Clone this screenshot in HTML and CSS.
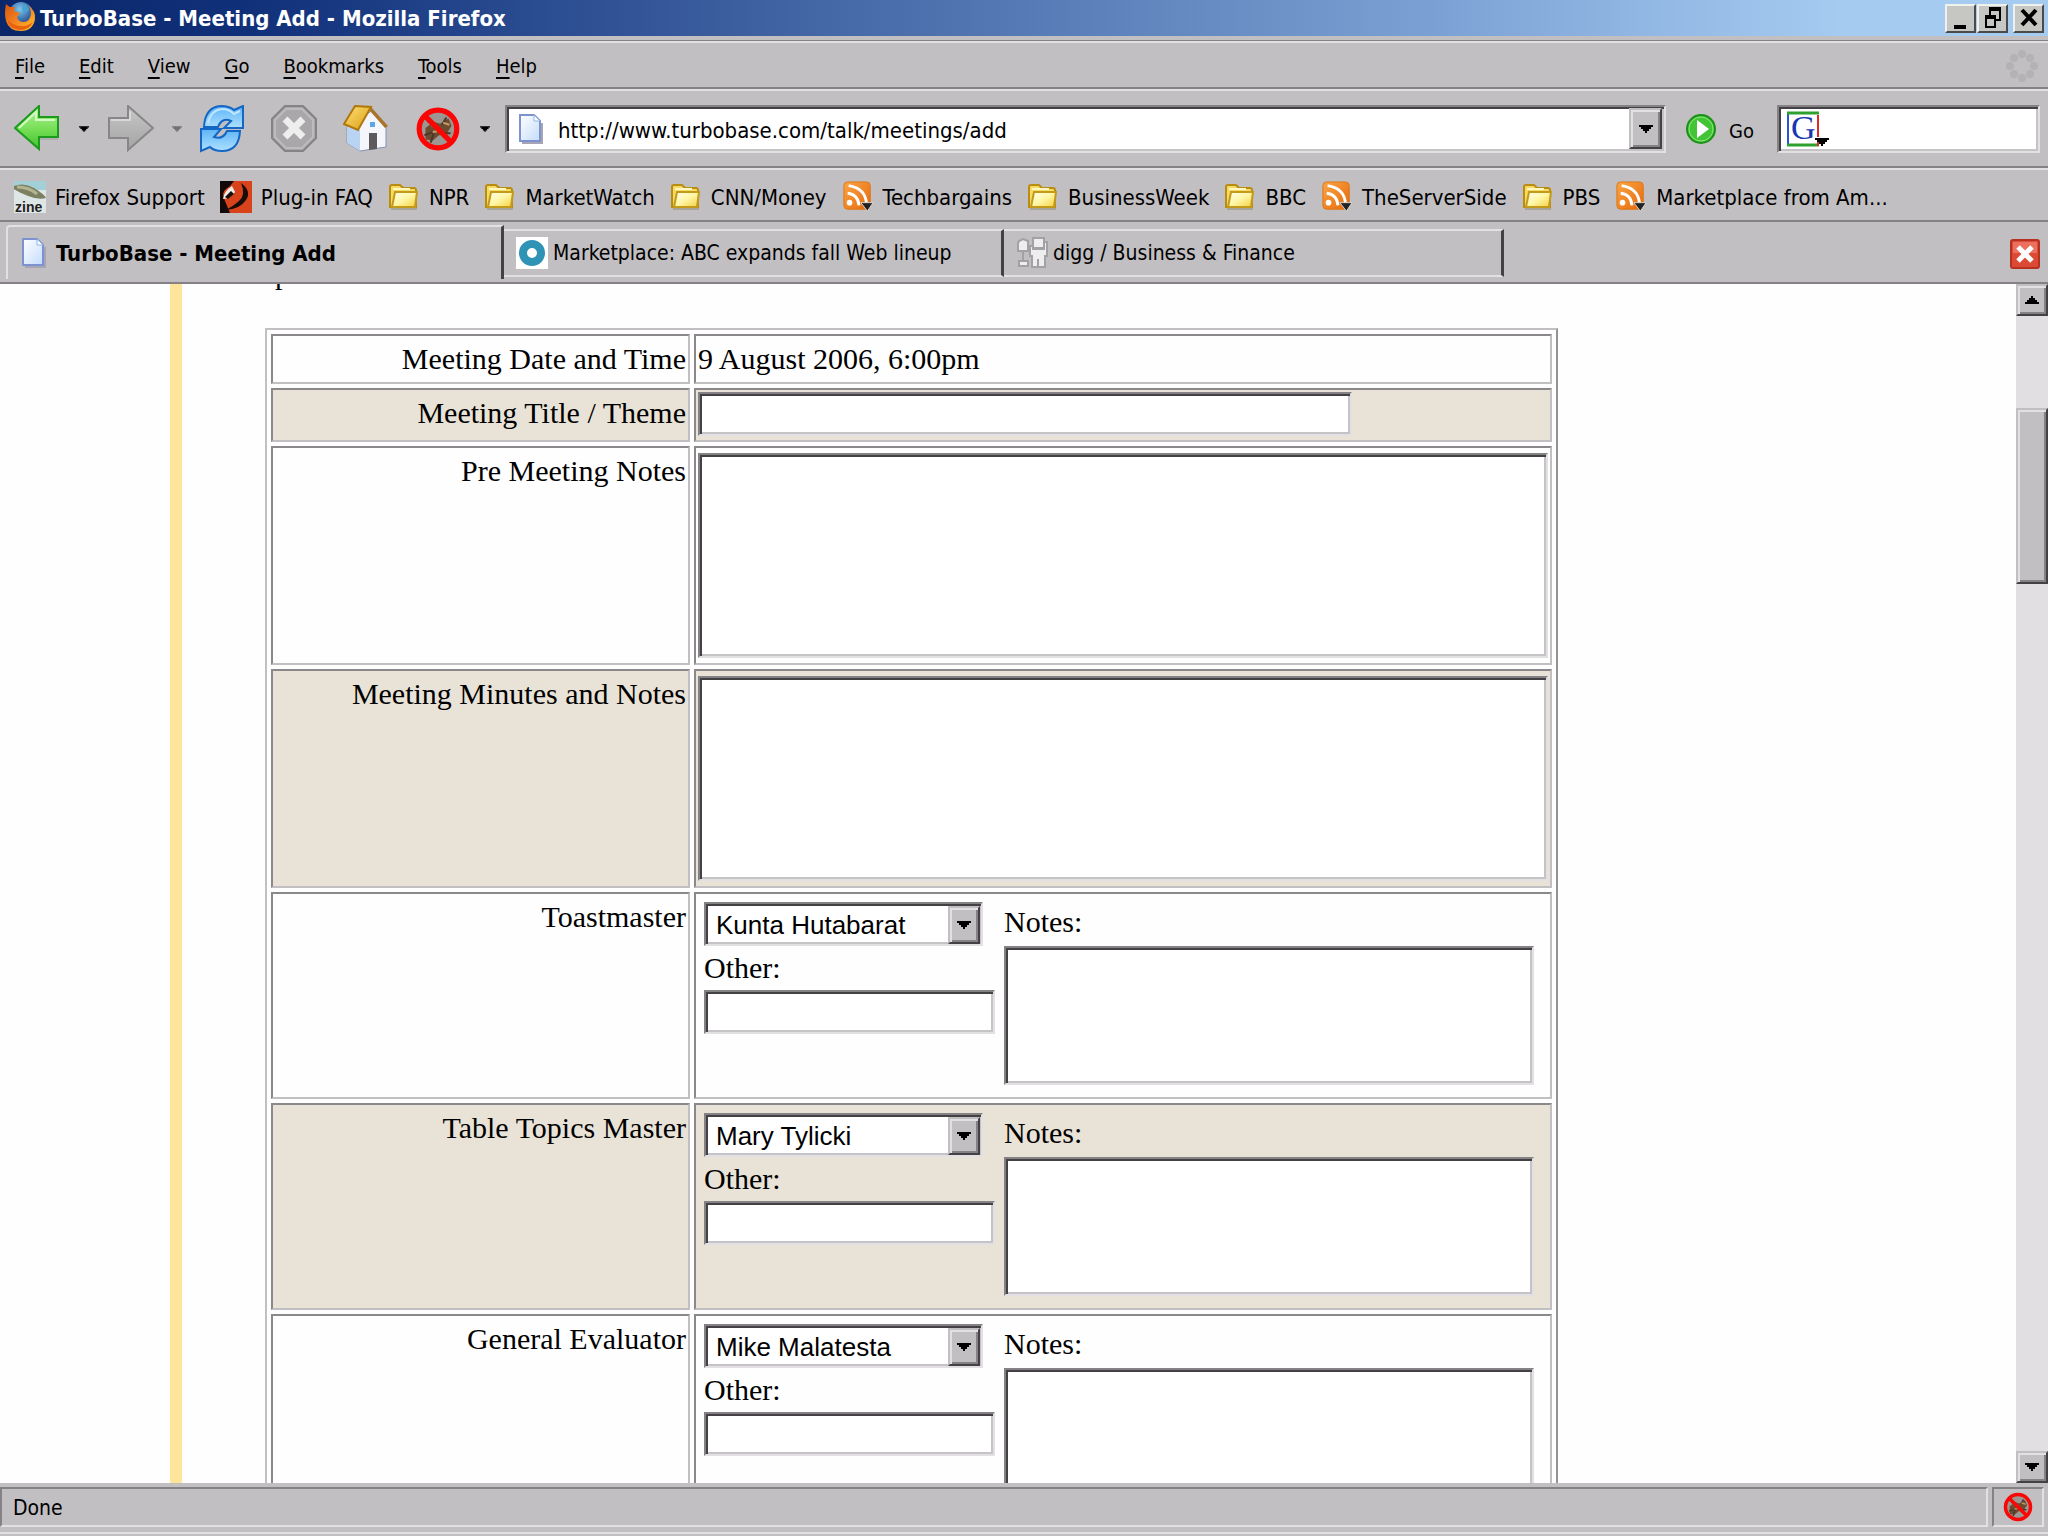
FILE: index.html
```html
<!DOCTYPE html>
<html lang="en">
<head>
<meta charset="utf-8">
<title>TurboBase - Meeting Add - Mozilla Firefox</title>
<link rel="stylesheet" href="styles.css">
</head>
<body>
<svg class="defs" aria-hidden="true">
  <defs>
    <linearGradient id="gGreen" x1="0" y1="0" x2="0" y2="1"><stop offset="0" stop-color="#b4f29a"/><stop offset=".5" stop-color="#7be05a"/><stop offset="1" stop-color="#3fc22c"/></linearGradient>
    <linearGradient id="gGrey" x1="0" y1="0" x2="0" y2="1"><stop offset="0" stop-color="#c8c7c8"/><stop offset="1" stop-color="#a5a4a5"/></linearGradient>
    <linearGradient id="gBlue" x1="0" y1="0" x2="0" y2="1"><stop offset="0" stop-color="#5db4f7"/><stop offset="1" stop-color="#aee0ff"/></linearGradient>
    <linearGradient id="gFolder" x1="0" y1="0" x2="1" y2="1"><stop offset="0" stop-color="#fffef0"/><stop offset=".5" stop-color="#fff6a4"/><stop offset="1" stop-color="#f3cf3c"/></linearGradient>
    <linearGradient id="gRss" x1="0" y1="0" x2="1" y2="1"><stop offset="0" stop-color="#f9a545"/><stop offset="1" stop-color="#e8690a"/></linearGradient>
    <linearGradient id="gPage" x1="0" y1="0" x2="1" y2="1"><stop offset="0" stop-color="#ffffff"/><stop offset="1" stop-color="#c3dcfb"/></linearGradient>
    <linearGradient id="gRoof" x1="0" y1="0" x2="1" y2="1"><stop offset="0" stop-color="#ffe27a"/><stop offset="1" stop-color="#d99b10"/></linearGradient>
    <radialGradient id="gGlobe" cx=".45" cy=".3" r=".7"><stop offset="0" stop-color="#7ec6ee"/><stop offset="1" stop-color="#173c86"/></radialGradient>
    <linearGradient id="gFox" x1="0" y1="0" x2="1" y2="1"><stop offset="0" stop-color="#d5560f"/><stop offset=".5" stop-color="#f58220"/><stop offset="1" stop-color="#fdc52e"/></linearGradient>
  </defs>
  <symbol id="folder" viewBox="0 0 32 32">
    <path d="M3 28h26" stroke="#a8a498" stroke-width="2"/>
    <path d="M2 26V6q0-2 2-2h8l3 3h11q2 0 2 2v17z" fill="#f6da62" stroke="#b98d12" stroke-width="2"/>
    <path d="M5 8h17" stroke="#fff8c0" stroke-width="2"/>
    <path d="M7 11h22l-2 15H4z" fill="url(#gFolder)" stroke="#c39a1a" stroke-width="2"/>
  </symbol>
  <symbol id="rss" viewBox="0 0 32 34">
    <rect x="1" y="1" width="28" height="29" rx="4" fill="url(#gRss)" stroke="#dd7410"/>
    <circle cx="7" cy="23" r="3" fill="#fff"/>
    <path d="M5 13q11 1 12 13M6 5q18 3 19 19" fill="none" stroke="#fff" stroke-width="3"/>
    <path d="M19 23h13l-6 9z" fill="#222" stroke="#d8d8d8"/>
  </symbol>
  <symbol id="page" viewBox="0 0 24 30">
    <path d="M3 29h20V9" fill="none" stroke="#a7a5b5" stroke-width="2"/>
    <path d="M1 1h14l6 6v20H1z" fill="url(#gPage)" stroke="#7f92d0" stroke-width="2"/>
    <path d="M15 1v6h6z" fill="#fff" stroke="#8fb4e4"/>
  </symbol>
  <symbol id="adblock" viewBox="0 0 44 46">
    <circle cx="23" cy="24" r="18" fill="#9c9793"/>
    <path d="M10 22l8-6 6 2 8-5 3 7-5 8-7 1-6 5-7-1z" fill="#6e4b2f"/>
    <path d="M9 29l8-3M12 15l6 5M30 12l-4 7M34 27l-8 0M18 27l-3 9" stroke="#4b382b" stroke-width="2"/>
    <path d="M16 20l6 2M27 17l6 2M17 26l5-1" stroke="#c19a66" stroke-width="2"/>
    <circle cx="22" cy="23" r="18" fill="none" stroke="#fb0505" stroke-width="5"/>
    <path d="M9 10l26 26" stroke="#fb0505" stroke-width="5"/>
  </symbol>
  <symbol id="caret" viewBox="0 0 14 8"><path d="M0 0h14v2h-2v2h-2v2H8v2H6V6H4V4H2V2H0z"/></symbol>
</svg>

<header class="titlebar">
  <svg class="fox" viewBox="0 0 32 30" aria-hidden="true">
    <circle cx="17" cy="13" r="12" fill="url(#gGlobe)"/>
    <path d="M19 3q5 1 6 6l-4 3-3-4z" fill="#4aa3cf"/>
    <path d="M2 3q2 2 4 3l5 0-1 4 6 2-3 4q1 5 7 5 6-1 7-8 0-6-3-9 8 6 7 14-2 12-14 12Q5 30 2 20q-2-8 0-17z" fill="url(#gFox)"/>
    <path d="M3 18q2 10 13 11 9 0 13-8-6 5-13 4-8-1-13-7z" fill="#e8620e"/>
  </svg>
  <h1 class="title">TurboBase - Meeting Add - Mozilla Firefox</h1>
  <div class="winbtns">
    <button class="winbtn" aria-label="Minimize"><svg viewBox="0 0 24 24"><path d="M5 19h12v4H5z"/></svg></button>
    <button class="winbtn" aria-label="Restore"><svg viewBox="0 0 24 24"><path d="M8 3h12M4 11h11" stroke="#000" stroke-width="4"/><path d="M9 10V3M19 3v11h-4M5 11v10h9V11" fill="none" stroke="#000" stroke-width="2"/></svg></button>
    <button class="winbtn winbtn-close" aria-label="Close"><svg viewBox="0 0 24 24"><path d="M5 4l14 15M19 4L5 19" stroke="#000" stroke-width="4"/></svg></button>
  </div>
</header>

<nav class="menubar">
  <button><u>F</u>ile</button><button><u>E</u>dit</button><button><u>V</u>iew</button><button><u>G</u>o</button><button><u>B</u>ookmarks</button><button><u>T</u>ools</button><button><u>H</u>elp</button>
  <svg class="throbber" viewBox="0 0 32 32" aria-hidden="true"><g fill="#b4b2b4"><circle cx="16" cy="4" r="4"/><circle cx="24" cy="8" r="4"/><circle cx="28" cy="16" r="4"/><circle cx="24" cy="24" r="4"/><circle cx="16" cy="28" r="4"/><circle cx="8" cy="24" r="4"/><circle cx="4" cy="16" r="4"/><circle cx="8" cy="8" r="4"/></g></svg>
</nav>

<div class="toolbar">
  <button class="tool" aria-label="Back"><svg viewBox="0 0 46 48"><path d="M3 24L26 3v11h18v21H26v11z" fill="#a09ea0" opacity=".5"/><path d="M1 23L25 1v11h19v20H25v12z" fill="url(#gGreen)" stroke="#1b9a1b" stroke-width="2"/><path d="M5 23L22 7v8h19" fill="none" stroke="#d4fac4" stroke-width="2"/></svg></button>
  <button class="drop" aria-label="Back history"><svg><use href="#caret"/></svg></button>
  <button class="tool" aria-label="Forward"><svg viewBox="0 0 46 48"><path d="M45 23L20 1v12H1v20h19v12z" fill="url(#gGrey)" stroke="#888688" stroke-width="2"/><path d="M3 15h19V6" fill="none" stroke="#d8d7d8" stroke-width="2"/></svg></button>
  <button class="drop drop-off" aria-label="Forward history"><svg><use href="#caret"/></svg></button>
  <button class="tool tool-reload" aria-label="Reload"><svg viewBox="0 0 46 48"><path d="M5 22Q6 2 22 1q8 0 13 4l9-4v22H25l7-7q-9-4-13 6z" fill="url(#gBlue)" stroke="#1467c4" stroke-width="2"/><path d="M41 26Q40 46 23 46q-8 0-12-4l-9 4V24h20l-7 8q9 3 13-6z" fill="url(#gBlue)" stroke="#1467c4" stroke-width="2"/><path d="M9 18Q12 5 23 4q7 0 12 5l6-3" fill="none" stroke="#bfe5ff" stroke-width="2"/></svg></button>
  <button class="tool tool-wide" aria-label="Stop"><svg viewBox="0 0 46 48"><path d="M14 1h18l13 13v19L32 46H14L1 33V14z" fill="#a9a7a9" stroke="#858385" stroke-width="2"/><path d="M15 4h16l11 11v17L31 43H15L4 32V15z" fill="none" stroke="#bdbbbd" stroke-width="2"/><path d="M14 14l18 18M32 14L14 32" stroke="#efeeef" stroke-width="7"/></svg></button>
  <button class="tool tool-wide" aria-label="Home"><svg viewBox="0 0 46 48"><path d="M4 22v16l13 8 26-4V20L30 5z" fill="#f4f6fb" stroke="#8593ac"/><path d="M4 22v16l13 8V25z" fill="#b9d4f2"/><path d="M26 28h8v16l-8 1z" fill="#5c5a5c"/><path d="M27 17h5v5h-5z" fill="#5aa7e8"/><path d="M28 2l17 19-3 2L27 6z" fill="#a8742a"/><path d="M12 1l16 1-13 23L1 19z" fill="url(#gRoof)" stroke="#b0780c" stroke-width="2"/></svg></button>
  <button class="tool tool-wide" aria-label="Adblock"><svg><use href="#adblock"/></svg></button>
  <button class="drop" aria-label="Adblock menu"><svg><use href="#caret"/></svg></button>
  <div class="field urlbar">
    <svg class="page-icon"><use href="#page"/></svg>
    <input type="text" aria-label="Address" value="http://www.turbobase.com/talk/meetings/add">
    <button class="raised url-drop" aria-label="Show history"><svg class="caret"><use href="#caret"/></svg></button>
  </div>
  <button class="go"><svg viewBox="0 0 32 32" aria-hidden="true"><circle cx="16" cy="16" r="14" fill="#42c436" stroke="#1c9119" stroke-width="2"/><circle cx="16" cy="16" r="12" fill="none" stroke="#8be77a" stroke-width="1"/><path d="M12 7l12 9-12 9z" fill="#fff"/></svg><span>Go</span></button>
  <div class="field search">
    <svg class="google" viewBox="0 0 44 36" aria-hidden="true"><path d="M2 34V2" stroke="#2a55d0" stroke-width="2"/><path d="M1 2h32M1 34h32" stroke="#2ea02e" stroke-width="3"/><path d="M32 4v22M32 31v4" stroke="#e02828" stroke-width="2"/><text class="google-g" x="5" y="28">G</text><path d="M29 27h14v2h-2v2h-2v2h-2v2h-2v-2h-2v-2h-2v-2h-2z"/></svg>
    <input type="text" aria-label="Search the web">
  </div>
</div>

<nav class="bookmarks">
  <a href="#"><svg viewBox="0 0 32 32"><path d="M0 0h32v32H0z" fill="#dfe6e6"/><path d="M0 0h32v9H0z" fill="#a3cfd6"/><path d="M0 5Q10 1 20 7t12 10q-8 2-18-2T0 8z" fill="#7d8060"/><path d="M3 6q12 0 20 7" stroke="#b2b391" stroke-width="3" fill="none"/><text class="zine" x="1" y="31">zine</text></svg>Firefox Support</a>
  <a href="#"><svg viewBox="0 0 32 32"><path d="M0 0h32v32H0z" fill="#d9431c"/><path d="M0 0h14q-3 5-8 8T5 20l5 12H0z" fill="#120a08"/><path d="M21 2q5 12-2 18t-13 9q14-1 20-10T21 2z" fill="#1a0d08"/><path d="M12 5q-8 5-9 13 7 0 12-7z" fill="#f1ece8"/><path d="M5 16l6-6 3 3-6 5z" fill="#15100e"/></svg>Plug-in FAQ</a>
  <a href="#"><svg><use href="#folder"/></svg>NPR</a>
  <a href="#"><svg><use href="#folder"/></svg>MarketWatch</a>
  <a href="#"><svg><use href="#folder"/></svg>CNN/Money</a>
  <a href="#"><svg><use href="#rss"/></svg>Techbargains</a>
  <a href="#"><svg><use href="#folder"/></svg>BusinessWeek</a>
  <a href="#"><svg><use href="#folder"/></svg>BBC</a>
  <a href="#"><svg><use href="#rss"/></svg>TheServerSide</a>
  <a href="#"><svg><use href="#folder"/></svg>PBS</a>
  <a href="#"><svg><use href="#rss"/></svg>Marketplace from Am...</a>
</nav>

<div class="tabs">
  <button class="tab tab-active"><svg class="page-icon"><use href="#page"/></svg>TurboBase - Meeting Add</button>
  <button class="tab"><svg class="favicon" viewBox="0 0 32 32" aria-hidden="true"><path d="M0 0h32v32H0z" fill="#fff"/><circle cx="16" cy="16" r="9" fill="none" stroke="#2f93b5" stroke-width="8"/></svg>Marketplace: ABC expands fall Web lineup</button>
  <button class="tab"><svg class="favicon" viewBox="0 0 32 32" aria-hidden="true"><g fill="#efeeef" stroke="#a3a1a5" stroke-width="2"><path d="M7 14v10"/><path d="M3 4l4-2 5 2v10H2V6zM3 24h9v5H3zM17 1h11v10H17z"/><path d="M14 9h3v3h11V5h3v14h-2v11H16V19h-2z"/></g><path d="M22 22v8" stroke="#a3a1a5" stroke-width="2"/></svg>digg / Business &amp; Finance</button>
  <div class="tab-space"></div>
  <button class="tab-close" aria-label="Close tab"><svg viewBox="0 0 30 30"><rect x="1" y="1" width="28" height="28" rx="2" fill="#dc4a35" stroke="#b8301f" stroke-width="2"/><path d="M3 14V3h24v11z" fill="#ef8270" opacity=".7"/><path d="M8 8l14 14M22 8L8 22" stroke="#fff" stroke-width="5"/></svg></button>
</div>

<div class="viewport">
  <div class="margin"></div>
  <main class="content">
    <p class="intro">p</p>
    <table class="form">
      <tr><th scope="row">Meeting Date and Time</th><td>9 August 2006, 6:00pm</td></tr>
      <tr class="alt"><th scope="row"><label for="theme">Meeting Title / Theme</label></th><td><input class="field theme" id="theme" type="text"></td></tr>
      <tr><th scope="row"><label for="pre">Pre Meeting Notes</label></th><td><textarea class="field notes" id="pre"></textarea></td></tr>
      <tr class="alt"><th scope="row"><label for="minutes">Meeting Minutes and Notes</label></th><td><textarea class="field notes" id="minutes"></textarea></td></tr>
      <tr><th scope="row"><label for="toast">Toastmaster</label></th><td>
        <div class="role">
          <div class="person">
            <div class="picker"><select class="field" id="toast"><option>Kunta Hutabarat</option></select><span class="raised picker-arrow"><svg class="caret"><use href="#caret"/></svg></span></div>
            <label for="toast-other">Other:</label><input class="field" id="toast-other" type="text">
          </div>
          <div class="remarks"><label for="toast-notes">Notes:</label><textarea class="field" id="toast-notes"></textarea></div>
        </div></td></tr>
      <tr class="alt"><th scope="row"><label for="topics">Table Topics Master</label></th><td>
        <div class="role">
          <div class="person">
            <div class="picker"><select class="field" id="topics"><option>Mary Tylicki</option></select><span class="raised picker-arrow"><svg class="caret"><use href="#caret"/></svg></span></div>
            <label for="topics-other">Other:</label><input class="field" id="topics-other" type="text">
          </div>
          <div class="remarks"><label for="topics-notes">Notes:</label><textarea class="field" id="topics-notes"></textarea></div>
        </div></td></tr>
      <tr><th scope="row"><label for="eval">General Evaluator</label></th><td>
        <div class="role">
          <div class="person">
            <div class="picker"><select class="field" id="eval"><option>Mike Malatesta</option></select><span class="raised picker-arrow"><svg class="caret"><use href="#caret"/></svg></span></div>
            <label for="eval-other">Other:</label><input class="field" id="eval-other" type="text">
          </div>
          <div class="remarks"><label for="eval-notes">Notes:</label><textarea class="field" id="eval-notes"></textarea></div>
        </div></td></tr>
    </table>
  </main>
  <div class="scrollbar">
    <button class="raised" aria-label="Scroll up"><svg class="caret caret-up"><use href="#caret"/></svg></button>
    <div class="track"><div class="raised thumb"></div></div>
    <button class="raised" aria-label="Scroll down"><svg class="caret"><use href="#caret"/></svg></button>
  </div>
</div>

<footer class="status">
  <div class="panel panel-text">Done</div>
  <div class="panel panel-icon"><svg aria-hidden="true"><use href="#adblock"/></svg></div>
</footer>
</body>
</html>
```

FILE: styles.css
```css
:root {
  --face: #c2bfc2;
  --light: #e2e0e2;
  --shade: #848284;
  --dark: #434143;
  --ui: "DejaVu Sans Condensed", "DejaVu Sans", sans-serif;
}

* { box-sizing: border-box; }

body {
  margin: 0;
  height: 100vh;
  display: flex;
  flex-direction: column;
  overflow: hidden;
  background: var(--face);
  color: #000;
  font-family: var(--ui);
  font-size: 22px;
}

button {
  margin: 0;
  padding: 0;
  border: 0;
  background: none;
  color: inherit;
  font: inherit;
}

svg { display: block; flex: none; }
.defs { position: absolute; width: 0; height: 0; }

/* title bar */
.titlebar {
  height: 36px;
  flex: none;
  display: flex;
  align-items: center;
  padding: 0 4px;
  background: linear-gradient(90deg, #0b2769, #10307a 12%, #7ba1d4 70%, #a6cbf1 90%);
}
.fox { width: 32px; height: 30px; margin-bottom: 4px; }
.title {
  flex: 1;
  margin: 0 0 0 4px;
  color: #fff;
  font-size: 22px;
  font-weight: bold;
  white-space: nowrap;
}
.winbtns { display: flex; gap: 1px; }
.winbtn {
  width: 31px;
  height: 29px;
  display: grid;
  place-items: center;
  background: #c6c6c2;
  border: 2px solid;
  border-color: #f0f0ec #4a4a4a #4a4a4a #f0f0ec;
}
.winbtn svg { width: 24px; height: 24px; }
.winbtn-close { margin-left: 4px; }

/* menu bar */
.menubar {
  height: 53px;
  flex: none;
  display: flex;
  align-items: center;
  gap: 34px;
  padding: 8px 10px 0 15px;
  border-bottom: 2px solid var(--shade);
  background: linear-gradient(var(--face) 4px, var(--shade) 4px, var(--shade) 5px, var(--light) 5px, var(--light) 7px, transparent 7px);
  font-size: 20px;
}
.menubar u { text-underline-offset: 4px; text-decoration-thickness: 2px; }
.throbber { width: 32px; height: 32px; margin-left: auto; }

/* navigation toolbar */
.toolbar {
  height: 79px;
  flex: none;
  display: flex;
  align-items: center;
  padding: 0 8px 0 14px;
  border-top: 2px solid var(--light);
  border-bottom: 2px solid var(--shade);
}
.tool svg { width: 46px; height: 48px; }
.tool-wide { margin-right: 26px; }
.tool-reload { margin-right: 26px; }
.drop { width: 48px; display: grid; place-items: center; }
.drop svg { width: 10px; height: 6px; }
.drop-off { width: 45px; opacity: .4; }
.tool-wide + .drop { width: 12px; margin: 0 14px 0 -8px; }
.field {
  border: 2px solid;
  border-color: #848284 #e2e0e2 #e2e0e2 #848284;
  border-radius: 0;
  background: #fff;
  box-shadow: inset 2px 2px 0 #434143, inset -2px -2px 0 #c6c3c6;
}
.toolbar .field {
  height: 48px;
  display: flex;
  align-items: center;
  padding: 2px;
}
.toolbar input {
  flex: 1;
  min-width: 0;
  padding: 4px 0 0;
  border: 0;
  background: none;
  color: #000;
  font: inherit;
}
.urlbar { flex: 1; }
.page-icon { width: 24px; height: 30px; }
.urlbar .page-icon { margin: 0 15px 0 10px; }
.raised {
  display: grid;
  place-items: center;
  background: var(--face);
  border: 2px solid;
  border-color: #c2bfc2 #434143 #434143 #c2bfc2;
  box-shadow: inset 2px 2px 0 #e2e0e2, inset -2px -2px 0 #848284;
}
.url-drop { width: 33px; height: 41px; }
.caret { width: 14px; height: 8px; }
.caret-up { transform: rotate(180deg); }
.go {
  width: 111px;
  display: flex;
  align-items: center;
  gap: 12px;
  padding-left: 19px;
  font-size: 20px;
}
.go span { padding-top: 4px; }
.go svg { width: 32px; height: 32px; }
.search { width: 263px; flex: none; }
.google { width: 44px; height: 36px; margin-left: 5px; }
.google-g { fill: #1838b0; font: 34px "Liberation Serif", serif; }

/* bookmarks toolbar */
.bookmarks {
  height: 54px;
  flex: none;
  display: flex;
  align-items: center;
  gap: 15px;
  padding: 4px 0 0 14px;
  border-top: 2px solid var(--light);
  border-bottom: 2px solid var(--shade);
  white-space: nowrap;
}
.bookmarks a {
  display: flex;
  align-items: center;
  gap: 9px;
  color: inherit;
  text-decoration: none;
}
.bookmarks svg { width: 32px; height: 32px; }
.zine { fill: #222; font: bold 14px "Liberation Sans", Arial, sans-serif; }

/* tab strip */
.tabs {
  height: 62px;
  flex: none;
  display: flex;
  align-items: stretch;
  padding: 3px 8px 0 6px;
  border-bottom: 2px solid var(--shade);
  font-size: 21px;
}
.tab {
  width: 500px;
  display: flex;
  align-items: center;
  gap: 5px;
  margin: 4px 0 5px;
  padding-left: 12px;
  border-top: 2px solid var(--light);
  border-bottom: 2px solid var(--light);
  border-right: 3px solid var(--dark);
  white-space: nowrap;
}
.tab-active {
  width: 498px;
  gap: 10px;
  margin: 0 0 3px;
  padding-left: 14px;
  border-left: 2px solid var(--light);
  border-bottom: 0;
  border-radius: 4px 0 0;
  font-size: 22px;
  font-weight: bold;
}
.favicon { width: 32px; height: 32px; }
.tab-space { flex: 1; }
.tab-close svg { width: 30px; height: 30px; }

/* page */
.viewport {
  flex: 1;
  min-height: 0;
  display: flex;
  background: #fefefe;
}
.margin { width: 170px; flex: none; }
.content {
  flex: 1;
  min-width: 0;
  overflow: hidden;
  padding: 0 4px 0 83px;
  border-left: 12px solid #ffe599;
  font-family: "Liberation Serif", "Times New Roman", serif;
  font-size: 30px;
  line-height: 42px;
}
.intro {
  height: 7px;
  display: flex;
  align-items: flex-end;
  margin: 0 0 37px 10px;
  overflow: hidden;
  line-height: 34px;
}
.form {
  width: 74%;
  table-layout: fixed;
  border: 2px solid;
  border-color: #c2bfc2 #949294 #949294 #c2bfc2;
  border-spacing: 4px;
}
.form th, .form td {
  padding: 2px;
  border: 2px solid;
  border-color: #8a888a #c2bfc2 #c2bfc2 #8a888a;
  vertical-align: top;
}
.form th { width: 419px; font-weight: normal; text-align: right; }
.alt th, .alt td { background: #e9e3d7; }
.form .field { display: block; height: 44px; padding: 4px 8px; resize: none; font-family: "Liberation Sans", Arial, sans-serif; font-size: 26px; }
.form .theme { width: 77%; margin-bottom: 2px; }
.form .notes { width: 100%; height: 205px; margin: 3px 0; }
.role { display: flex; gap: 9px; padding: 6px 14px 10px 6px; }
.person { width: 291px; flex: none; }
.person label, .remarks label { display: block; line-height: 44px; }
.remarks label { margin-bottom: 4px; line-height: 40px; }
.person input { width: 100%; }
.remarks { flex: 1; }
.remarks .field { width: 100%; height: 139px; }
.picker { position: relative; width: 279px; }
.form .picker .field { width: 100%; padding: 2px 10px 0; appearance: none; color: #000; }
.picker-arrow {
  position: absolute;
  top: 4px;
  right: 3px;
  bottom: 2px;
  width: 32px;
  pointer-events: none;
}

/* scroll bar */
.scrollbar { width: 32px; flex: none; display: flex; flex-direction: column; }
.scrollbar button { height: 32px; }
.track { flex: 1; padding-top: 92px; background: #e1dfe1; }
.thumb { height: 176px; }

/* status bar */
.status {
  height: 53px;
  flex: none;
  display: flex;
  gap: 4px;
  padding: 4px 4px 7px 0;
  border-bottom: 2px solid var(--face);
  box-shadow: inset 0 -2px 0 var(--light);
  font-size: 21px;
}
.panel {
  display: flex;
  align-items: center;
  border: 2px solid;
  border-color: var(--shade) var(--light) var(--light) var(--shade);
}
.panel-text { flex: 1; padding: 2px 0 0 11px; }
.panel-icon { width: 52px; justify-content: center; }
.panel-icon svg { width: 32px; height: 32px; }
```
